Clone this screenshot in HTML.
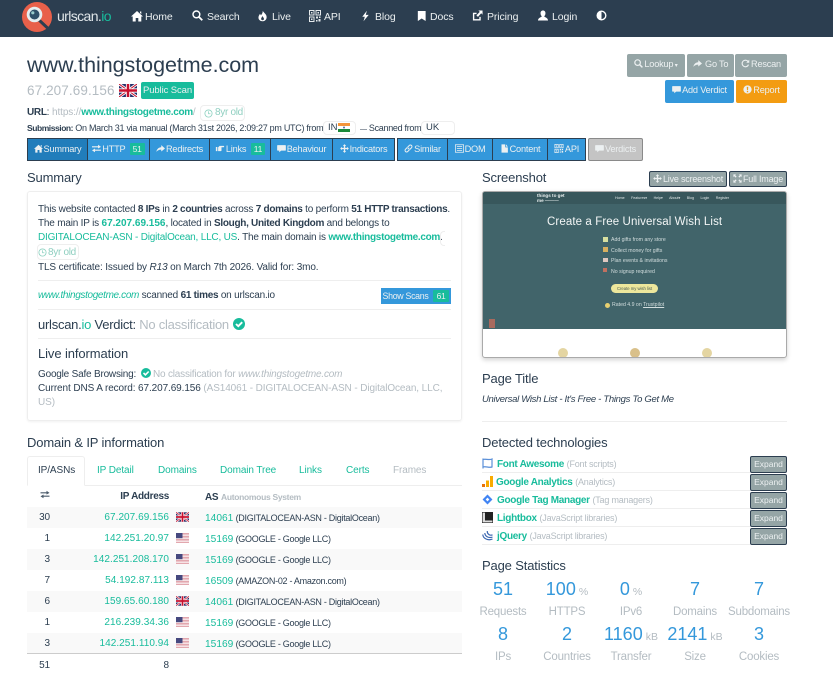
<!DOCTYPE html>
<html><head><meta charset="utf-8">
<style>
html,body{margin:0;padding:0;background:#fff}
body{width:833px;height:685px;overflow:hidden;position:relative;font-family:"Liberation Sans",sans-serif;color:#2c3e50;font-size:10px}
.t,.i,.b,.l{position:absolute}
.t{white-space:nowrap;line-height:14px;height:14px}
.s{font-size:10px;letter-spacing:-.1px}
.p{letter-spacing:-.2px}
.ip{letter-spacing:.05px}
.g{color:#18bc9c}.m{color:#b4bcc2}
b{font-weight:bold;letter-spacing:-.3px}
b.d{letter-spacing:0}
svg{display:block}
.nav{left:0;top:0;width:833px;height:37px;background:#2c3e50;position:absolute}
.nt{color:#ecf0f1;font-size:10.5px;top:10px;letter-spacing:-.1px}
.b{box-sizing:border-box;color:#ecf0f1;font-size:9.2px;line-height:21px;text-align:center;white-space:nowrap;letter-spacing:-.2px}
.bt{background:#3498db;height:23px;top:138px;border:1px solid #2c3e50;border-left:0;line-height:21px}
.gr{background:#95a5a6;border-radius:2px;height:23px;top:54px}
.h{font-size:13px;letter-spacing:-.15px;height:18px;line-height:18px}
.bd{display:inline-block;background:#18bc9c;color:#ecf0f1;border-radius:1px;padding:0 3px;line-height:12px;font-size:8.5px;margin-left:2px}
.ic{display:inline-block;vertical-align:-1px;margin-right:1px}
.hr{position:absolute;height:1px;background:#eee}
.st{position:absolute;left:27px;width:435px;height:21px}
.exp{position:absolute;left:750px;width:37px;height:17px;background:#95a5a6;border:1px solid #2c3e50;box-sizing:border-box;border-radius:2px;color:#ecf0f1;font-size:8.5px;line-height:15px;text-align:center}
.c{position:absolute;width:64px;text-align:center;white-space:nowrap;line-height:20px}
.n{font-size:18px;color:#3498db}
.n small{font-size:10.5px;color:#b4bcc2;margin-left:3px}
.lb{font-size:11.5px;color:#b4bcc2;letter-spacing:-.2px}
.a{font-size:9px;letter-spacing:-.28px}
.a .g{font-size:10.2px;letter-spacing:0}
.sm{font-size:5.2px;color:#d3dede;line-height:8px;height:8px}
.tp{font-size:9px;letter-spacing:-.2px;font-weight:normal}
</style></head>
<body>
<svg width="0" height="0" style="position:absolute">
<defs>
<symbol id="home" viewBox="0 0 12 12"><path d="M6 1 L12 6.5 H10.3 V11.5 H7.3 V8 H4.7 V11.5 H1.7 V6.5 H0 Z M9 1.5 H10.3 V4 L9 3 Z" fill="currentColor"/></symbol>
<symbol id="search" viewBox="0 0 12 12"><circle cx="4.8" cy="4.8" r="3.7" fill="none" stroke="currentColor" stroke-width="1.6"/><path d="M7.5 7.5 L11.2 11.2" stroke="currentColor" stroke-width="2"/></symbol>
<symbol id="fire" viewBox="0 0 12 12"><path d="M6.3 .3 C7 2.5 10.8 4 10.5 7.6 C10.3 10.2 8.3 11.7 6 11.7 C3.5 11.7 1.5 10 1.6 7.5 C1.7 5.8 2.7 4.8 3.3 3.6 C3.8 4.4 4 5 4.3 5.3 C5.3 4 6.4 2.5 6.3 .3 Z M6 6 C5.6 7.3 4.3 8 4.5 9.3 C4.6 10.2 5.2 10.6 6 10.6 C6.9 10.6 7.6 10 7.6 9.1 C7.6 8 6.4 7.3 6 6 Z" fill="currentColor" fill-rule="evenodd"/></symbol>
<symbol id="qr" viewBox="0 0 12 12"><path d="M.5.5h4.5v4.5h-4.5zM7 .5h4.5v4.5h-4.5zM.5 7h4.5v4.5h-4.5z" fill="none" stroke="currentColor" stroke-width="1"/><path d="M2 2h1.500v1.500h-1.500zM8.500 2h1.500v1.500h-1.500zM2 8.500h1.500v1.500h-1.500zM7 6.500h2v2h-2zM9.500 9h2v2.500h-2zM7 10h1.500v1.500h-1.500zM10 6.500h1.500v1.500h-1.500z" fill="currentColor"/></symbol>
<symbol id="bolt" viewBox="0 0 12 12"><path d="M7.500 .3 L2.500 6.800 H5.300 L3.800 11.700 L9.500 4.800 H6.300 Z" fill="currentColor"/></symbol>
<symbol id="book" viewBox="0 0 12 12"><path d="M2 .5 H10.500 V11.500 L6.200 8.700 L2 11.500 Z" fill="currentColor"/></symbol>
<symbol id="ext" viewBox="0 0 12 12"><path d="M1 3 H5 V4.500 H2.500 V10 H8 V7.500 H9.500 V11.500 H1 Z" fill="currentColor"/><path d="M7 .5 H11.500 V5 L10 3.500 L6.500 7.500 L4.800 5.800 L8.500 2 Z" fill="currentColor"/></symbol>
<symbol id="user" viewBox="0 0 12 12"><path d="M6 .5 C7.800 .5 8.700 1.800 8.700 3.500 C8.700 5 8 6.200 7.300 6.800 C7.300 7.800 11.500 8.300 11.500 11.500 H.5 C.5 8.300 4.700 7.800 4.700 6.800 C4 6.200 3.300 5 3.300 3.500 C3.300 1.800 4.200 .5 6 .5 Z" fill="currentColor"/></symbol>
<symbol id="half" viewBox="0 0 12 12"><circle cx="6" cy="6" r="4.700" fill="none" stroke="currentColor" stroke-width="1.500"/><path d="M6 1 A5 5 0 0 0 6 11 Z" fill="currentColor"/></symbol>
<symbol id="swap" viewBox="0 0 12 12"><path d="M0 3 H8 V1 L12 3.800 L8 6 V4.500 H0 Z M12 7.500 H4 V6 L0 8.500 L4 11 V9 H12 Z" fill="currentColor"/></symbol>
<symbol id="share" viewBox="0 0 12 12"><path d="M7 1.500 L12 6 L7 10 V7.500 C4 7.500 2 8.500 .5 10.500 C1 6.800 3.500 4.500 7 4.300 Z" fill="currentColor"/></symbol>
<symbol id="hand" viewBox="0 0 12 12"><path d="M.5 4H2.500V9.500H.5zM3.500 4.500 L5.500 2.500 H11 A1 1 0 0 1 11 4.300 H8 V8.500 A1 1 0 0 1 7 9.500 H3.500 Z" fill="currentColor"/></symbol>
<symbol id="chat" viewBox="0 0 12 12"><path d="M1 1.500 H11 A.8 .8 0 0 1 11.800 2.300 V8 A.8 .8 0 0 1 11 8.800 H5.500 L3 11 V8.800 H1 A.8 .8 0 0 1 .2 8 V2.300 A.8 .8 0 0 1 1 1.500 Z" fill="currentColor"/></symbol>
<symbol id="move" viewBox="0 0 12 12"><path d="M6 .2 L8.200 2.700 H6.900 V5.100 H9.300 V3.800 L11.800 6 L9.300 8.200 V6.900 H6.900 V9.300 H8.200 L6 11.800 L3.800 9.300 H5.100 V6.900 H2.700 V8.200 L.2 6 L2.700 3.800 V5.100 H5.100 V2.700 H3.800 Z" fill="currentColor"/></symbol>
<symbol id="link" viewBox="0 0 12 12"><path d="M5 7 L7 5 M4.500 4.500 L2 7 A2.100 2.100 0 0 0 5 10 L7.300 7.700 M7.500 7.500 L10 5 A2.100 2.100 0 0 0 7 2 L4.700 4.300" fill="none" stroke="currentColor" stroke-width="1.300"/></symbol>
<symbol id="list" viewBox="0 0 12 12"><path d="M.5 1 H11.500 V11 H.5 Z" fill="none" stroke="currentColor" stroke-width="1"/><path d="M2.500 3h7v1h-7zM2.500 5.500h7v1h-7zM2.500 8h7v1h-7z" fill="currentColor"/></symbol>
<symbol id="file" viewBox="0 0 12 12"><path d="M2 .5 H7 V4.500 H10.500 V11.500 H2 Z M8 .5 L10.500 3.500 H8 Z" fill="currentColor"/></symbol>
<symbol id="refresh" viewBox="0 0 12 12"><path d="M10 7.500 A4.400 4.400 0 1 1 9.300 3.200" fill="none" stroke="currentColor" stroke-width="1.500"/><path d="M11 .8 V5 H7 Z" fill="currentColor"/></symbol>
<symbol id="warn" viewBox="0 0 12 12"><circle cx="6" cy="6" r="5.500" fill="currentColor"/><path d="M5 2.500 H7 L6.700 7 H5.300 Z M5.100 8 H6.900 V9.700 H5.100 Z" fill="#f39c12"/></symbol>
<symbol id="full" viewBox="0 0 12 12"><path d="M.5 .5 H4 L3 1.700 L4.800 3.500 L3.500 4.800 L1.700 3 L.5 4 Z M11.500 .5 V4 L10.300 3 L8.500 4.800 L7.200 3.500 L9 1.700 L8 .5 Z M.5 11.500 V8 L1.700 9 L3.500 7.200 L4.800 8.500 L3 10.300 L4 11.500 Z M11.500 11.500 H8 L9 10.300 L7.200 8.500 L8.500 7.200 L10.300 9 L11.500 8 Z" fill="currentColor"/></symbol>
<symbol id="clock" viewBox="0 0 12 12"><circle cx="6" cy="6" r="4.800" fill="none" stroke="currentColor" stroke-width="1.100"/><path d="M6 3 V6.300 H8.500" fill="none" stroke="currentColor" stroke-width="1"/></symbol>
<symbol id="ok" viewBox="0 0 12 12"><circle cx="6" cy="6" r="6" fill="#18bc9c"/><path d="M3 6 L5.300 8.200 L9.200 4.200" fill="none" stroke="#fff" stroke-width="1.900"/></symbol>
<symbol id="uk" viewBox="0 0 18 13"><rect width="18" height="13" fill="#27306b"/><path d="M0 0 L18 13 M18 0 L0 13" stroke="#fff" stroke-width="2.800"/><path d="M0 0 L18 13 M18 0 L0 13" stroke="#c8102e" stroke-width="1"/><path d="M9 0 V13 M0 6.500 H18" stroke="#fff" stroke-width="4.200"/><path d="M9 0 V13 M0 6.500 H18" stroke="#c8102e" stroke-width="2.500"/></symbol>
<symbol id="us" viewBox="0 0 13 10"><rect width="13" height="10" fill="#fff"/><path d="M0 .4H13M0 1.900H13M0 3.400H13M0 4.900H13M0 6.400H13M0 7.900H13M0 9.400H13" stroke="#d98a94" stroke-width=".8"/><rect width="6.500" height="5.200" fill="#46497f"/></symbol>
<symbol id="in" viewBox="0 0 12 9"><rect width="12" height="3" fill="#f4953a"/><rect y="3" width="12" height="3" fill="#fff"/><rect y="6" width="12" height="3" fill="#1a8a3a"/><circle cx="6" cy="4.500" r="1" fill="#5a6a9a"/></symbol>
</defs>
</svg>

<div class="nav"></div>
<svg class="i" style="left:22px;top:2px" width="30" height="30" viewBox="0 0 30 30"><circle cx="15" cy="15" r="15" fill="#e8604a"/><path d="M17 18 L25 25.500" stroke="#2c3e50" stroke-width="3" stroke-linecap="round"/><circle cx="12.500" cy="12.500" r="7.800" fill="#e5eef0"/><circle cx="12.500" cy="12.500" r="5" fill="#2f5069"/><circle cx="10.800" cy="10.800" r="1.600" fill="#9cc"/></svg>
<span class="t" style="left:57px;top:8px;font-size:14px;line-height:17px;height:17px;color:#dfe5e8;letter-spacing:-.6px">urlscan.<span class="g">io</span></span>
<svg class="i" style="left:131px;top:10px;color:#fff" width="12" height="12"><use href="#home"/></svg><span class="t nt" style="left:145px">Home</span>
<svg class="i" style="left:192px;top:10px;color:#fff" width="11" height="11"><use href="#search"/></svg><span class="t nt" style="left:207px">Search</span>
<svg class="i" style="left:257px;top:10px;color:#fff" width="11" height="12"><use href="#fire"/></svg><span class="t nt" style="left:272px">Live</span>
<svg class="i" style="left:309px;top:10px;color:#e6eaec" width="12" height="12"><use href="#qr"/></svg><span class="t nt" style="left:324px">API</span>
<svg class="i" style="left:360px;top:10px;color:#fff" width="11" height="12"><use href="#bolt"/></svg><span class="t nt" style="left:375px">Blog</span>
<svg class="i" style="left:416px;top:10px;color:#fff" width="11" height="12"><use href="#book"/></svg><span class="t nt" style="left:430px">Docs</span>
<svg class="i" style="left:472px;top:10px;color:#fff" width="11" height="11"><use href="#ext"/></svg><span class="t nt" style="left:487px">Pricing</span>
<svg class="i" style="left:537px;top:10px;color:#fff" width="12" height="11"><use href="#user"/></svg><span class="t nt" style="left:552px">Login</span>
<svg class="i" style="left:596px;top:10px;color:#fff" width="11" height="11"><use href="#half"/></svg>

<span class="t" style="left:27px;top:52px;font-size:21.500px;line-height:26px;height:26px;letter-spacing:-.05px">www.thingstogetme.com</span>
<span class="t m" style="left:27px;top:82px;font-size:13.500px;line-height:18px;height:18px;letter-spacing:.1px">67.207.69.156</span>
<svg class="i" style="left:119px;top:84px" width="18" height="13"><use href="#uk"/></svg>
<div class="b" style="left:141px;top:82px;width:53px;height:17px;background:#18bc9c;border-radius:2px;line-height:17px;font-size:9.500px;letter-spacing:-.1px">Public Scan</div>

<span class="t s" style="left:27px;top:106px"><b>URL</b>: <span class="m">https://</span><b class="g">www.thingstogetme.com</b><span class="m">/</span></span>
<div class="i" style="left:200px;top:105px;width:45px;height:16px;border:1px solid #eee;border-radius:4px;box-sizing:border-box"></div>
<svg class="i" style="left:204px;top:109px;color:#8fd3c2" width="9" height="9"><use href="#clock"/></svg>
<span class="t s" style="left:215px;top:106px;color:#8fcfc0;letter-spacing:-.3px">8yr old</span>
<span class="t" style="left:27px;top:121px;font-size:9px;letter-spacing:-.28px"><b style="font-size:8.500px;letter-spacing:-.45px">Submission:</b> On March 31 via manual (March 31st 2026, 2:09:27 pm UTC) from</span>
<div class="i" style="left:323px;top:121px;width:33px;height:14px;border:1px solid #eee;border-radius:4px;box-sizing:border-box"></div>
<span class="t" style="left:328px;top:121px;font-size:9.500px">IN</span>
<svg class="i" style="left:338px;top:123px" width="12" height="9"><use href="#in"/></svg>
<span class="t" style="left:360px;top:121px;font-size:9px;letter-spacing:-.3px"><span style="font-size:7px">—</span> Scanned from</span>
<div class="i" style="left:421px;top:121px;width:34px;height:14px;border:1px solid #eee;border-radius:4px;box-sizing:border-box"></div>
<span class="t" style="left:426px;top:121px;font-size:9.500px">UK</span>

<div class="b bt" style="left:27px;width:61px;background:#217dbb;border-left:1px solid #2c3e50"><svg class="ic" width="9" height="9"><use href="#home"/></svg>Summary</div>
<div class="b bt" style="left:88px;width:62px"><svg class="ic" width="9" height="9"><use href="#swap"/></svg>HTTP <span class="bd">51</span></div>
<div class="b bt" style="left:150px;width:60px"><svg class="ic" width="9" height="9"><use href="#share"/></svg>Redirects</div>
<div class="b bt" style="left:210px;width:61px"><svg class="ic" width="10" height="9"><use href="#hand"/></svg>Links <span class="bd">11</span></div>
<div class="b bt" style="left:271px;width:62px"><svg class="ic" width="9" height="9"><use href="#chat"/></svg>Behaviour</div>
<div class="b bt" style="left:333px;width:62px"><svg class="ic" width="9" height="9"><use href="#move"/></svg>Indicators</div>
<div class="b bt" style="left:397px;width:51px;border-left:1px solid #2c3e50"><svg class="ic" width="9" height="9"><use href="#link"/></svg>Similar</div>
<div class="b bt" style="left:448px;width:45px"><svg class="ic" width="9" height="9"><use href="#list"/></svg>DOM</div>
<div class="b bt" style="left:493px;width:55px"><svg class="ic" width="9" height="9"><use href="#file"/></svg>Content</div>
<div class="b bt" style="left:548px;width:38px"><svg class="ic" width="10" height="9"><use href="#qr"/></svg>API</div>
<div class="b bt" style="left:588px;width:55px;background:#c4c4c4;border:1px solid #8a8a8a;border-radius:2px"><svg class="ic" width="9" height="9"><use href="#chat"/></svg>Verdicts</div>

<div class="b gr" style="left:627px;width:58px"><svg class="ic" width="9" height="9"><use href="#search"/></svg>Lookup<span style="font-size:6px"> ▾</span></div>
<div class="b gr" style="left:687px;width:47px"><svg class="ic" width="9" height="9"><use href="#share"/></svg> Go To</div>
<div class="b gr" style="left:735px;width:52px"><svg class="ic" width="9" height="9"><use href="#refresh"/></svg>Rescan</div>
<div class="b gr" style="left:665px;top:80px;width:69px;background:#3498db"><svg class="ic" width="9" height="9"><use href="#chat"/></svg>Add Verdict</div>
<div class="b gr" style="left:736px;top:80px;width:51px;background:#f39c12"><svg class="ic" width="9" height="9"><use href="#warn"/></svg>Report</div>

<span class="t h" style="left:27px;top:169px">Summary</span>
<div class="i" style="left:27px;top:191px;width:435px;height:230px;border:1px solid #eee;border-radius:3px;box-sizing:border-box;box-shadow:0 1px 2px rgba(0,0,0,.06)"></div>
<span class="t s p" style="left:38px;top:203px">This website contacted <b>8 IPs</b> in <b>2 countries</b> across <b>7 domains</b> to perform <b>51 HTTP transactions</b>.</span>
<span class="t s p" style="left:38px;top:217px">The main IP is <b class="g d">67.207.69.156</b>, located in <b>Slough, United Kingdom</b> and belongs to</span>
<span class="t s p" style="left:38px;top:231px"><span class="g">DIGITALOCEAN-ASN - DigitalOcean, LLC, US</span>. The main domain is <b class="g">www.thingstogetme.com</b>.</span>
<div class="i" style="left:440px;top:231px;width:5px;height:15px;border:1px solid #eee;border-right:0;border-radius:4px 0 0 4px;box-sizing:border-box"></div>
<div class="i" style="left:37px;top:244px;width:42px;height:16px;border:1px solid #eee;border-radius:4px;box-sizing:border-box"></div>
<svg class="i" style="left:38px;top:248px;color:#8fd3c2" width="9" height="9"><use href="#clock"/></svg>
<span class="t s" style="left:48px;top:246px;color:#8fcfc0;letter-spacing:-.3px">8yr old</span>
<span class="t s" style="left:38px;top:261px;letter-spacing:-.13px">TLS certificate: Issued by <i>R13</i> on March 7th 2026. Valid for: 3mo.</span>
<div class="hr" style="left:38px;top:280px;width:413px"></div>
<span class="t s p" style="left:38px;top:289px"><i class="g" style="letter-spacing:-.35px">www.thingstogetme.com</i> scanned <b>61 times</b> on urlscan.io</span>
<div class="b" style="left:381px;top:288px;width:70px;height:16px;background:#3498db;line-height:16px;font-size:8.800px;letter-spacing:-.3px">Show Scans <span class="bd" style="padding:0 4px">61</span></div>
<div class="hr" style="left:38px;top:309px;width:413px"></div>
<span class="t" style="left:38px;top:317px;font-size:13px;line-height:16px;height:16px;letter-spacing:-.25px">urlscan.<span class="g">io</span> Verdict: <span class="m">No classification</span></span>
<svg class="i" style="left:233px;top:318px" width="12" height="12"><use href="#ok"/></svg>
<div class="hr" style="left:38px;top:338px;width:413px"></div>
<span class="t" style="left:38px;top:346px;font-size:13px;line-height:16px;height:16px;letter-spacing:-.1px">Live information</span>
<span class="t s p" style="left:38px;top:368px">Google Safe Browsing:</span>
<svg class="i" style="left:141px;top:368px" width="10" height="10"><use href="#ok"/></svg>
<span class="t s m p" style="left:153px;top:368px">No classification for <i>www.thingstogetme.com</i></span>
<span class="t s" style="left:38px;top:382px">Current DNS A record: 67.207.69.156 <span class="m">(AS14061 - DIGITALOCEAN-ASN - DigitalOcean, LLC,</span></span>
<span class="t s m" style="left:38px;top:396px">US)</span>

<span class="t h" style="left:482px;top:169px">Screenshot</span>
<div class="b" style="left:649px;top:171px;width:78px;height:16px;background:#95a5a6;border:1px solid #2c3e50;border-radius:2px;line-height:14px;font-size:9px"><svg class="ic" width="9" height="9"><use href="#move"/></svg>Live screenshot</div>
<div class="b" style="left:729px;top:171px;width:58px;height:16px;background:#95a5a6;border:1px solid #2c3e50;border-radius:2px;line-height:14px;font-size:9px"><svg class="ic" width="9" height="9"><use href="#full"/></svg>Full Image</div>

<div class="i" style="left:482px;top:191px;width:305px;height:167px;border:1px solid #aaa;border-radius:3px;box-sizing:border-box;overflow:hidden;background:#fff;box-shadow:0 2px 5px rgba(0,0,0,.18)">
 <div class="i" style="left:0;top:0;width:303px;height:137px;background:#41646a"></div>
 <div class="i" style="left:0;top:0;width:303px;height:12px;background:#38575c"></div>
 <div style="filter:blur(.3px)">
 <span class="t" style="left:54px;top:1px;font-size:4.600px;color:#e8eeee;line-height:5px;height:5px;font-weight:bold">things to get</span>
 <span class="t" style="left:54px;top:6px;font-size:4.600px;color:#e8eeee;line-height:5px;height:5px;font-weight:bold">me ———</span>
 <span class="t" style="left:132px;top:3px;font-size:3.600px;color:#dfe7e7;line-height:6px;height:6px;word-spacing:5.500px">Home Features▾ Help▾ About▾ Blog Login Register</span>
 <span class="t" style="left:64px;top:23px;font-size:11.500px;color:#f3f6f6;line-height:14px;letter-spacing:.1px">Create a Free Universal Wish List</span>
 <div class="i" style="left:120px;top:45px;width:5px;height:5px;background:#d8dfa0"></div>
 <span class="t sm" style="left:128px;top:44px">Add gifts from any store</span>
 <div class="i" style="left:120px;top:55px;width:5px;height:5px;background:#d8b060"></div>
 <span class="t sm" style="left:128px;top:55px">Collect money for gifts</span>
 <div class="i" style="left:120px;top:66px;width:5px;height:4px;background:#e0c8c0"></div>
 <span class="t sm" style="left:128px;top:65px">Plan events &amp; invitations</span>
 <div class="i" style="left:120px;top:76px;width:4px;height:4px;background:#c07060"></div>
 <span class="t sm" style="left:128px;top:76px">No signup required</span>
 <div class="i" style="left:128px;top:92px;width:47px;height:9px;background:#ede79c;border-radius:5px"></div>
 <span class="t" style="left:134px;top:92px;font-size:4.200px;color:#4a5a50;line-height:9px;height:9px">Create my wish list</span>
 <div class="i" style="left:122px;top:111px;width:5px;height:5px;background:#e8d070;border-radius:50%"></div>
 <span class="t sm" style="left:129px;top:109px">Rated 4.9 on <u>Trustpilot</u></span>
 <div class="i" style="left:6px;top:127px;width:6px;height:9px;background:#a86a5e"></div>
 <div class="i" style="left:75px;top:156px;width:10px;height:10px;border-radius:50%;background:#e4d5a2"></div>
 <div class="i" style="left:147px;top:156px;width:10px;height:10px;border-radius:50%;background:#d9c08a"></div>
 <div class="i" style="left:219px;top:156px;width:10px;height:10px;border-radius:50%;background:#e4d5a2"></div>
 </div>
</div>

<span class="t h" style="left:482px;top:370px">Page Title</span>
<span class="t" style="left:482px;top:393px;font-size:9.500px;font-style:italic;letter-spacing:-.3px">Universal Wish List - It's Free - Things To Get Me</span>
<div class="hr" style="left:482px;top:421px;width:305px"></div>

<span class="t h" style="left:27px;top:434px">Domain &amp; IP information</span>
<div class="i" style="left:27px;top:456px;width:58px;height:30px;border:1px solid #eee;border-bottom:1px solid #fff;border-radius:3px 3px 0 0;box-sizing:border-box;background:#fff;z-index:2"></div>
<div class="hr" style="left:27px;top:485px;width:435px"></div>
<span class="t s" style="left:38px;top:464px;z-index:3">IP/ASNs</span>
<span class="t s g" style="left:97px;top:464px">IP Detail</span>
<span class="t s g" style="left:158px;top:464px">Domains</span>
<span class="t s g" style="left:220px;top:464px">Domain Tree</span>
<span class="t s g" style="left:299px;top:464px">Links</span>
<span class="t s g" style="left:346px;top:464px">Certs</span>
<span class="t s m" style="left:393px;top:464px">Frames</span>

<svg class="i" style="left:40px;top:490px;color:#4a5a6a" width="10" height="9"><use href="#swap"/></svg>
<span class="t s" style="right:664px;top:490px"><b>IP Address</b></span>
<span class="t s" style="left:205px;top:490px"><b>AS</b> <span class="m" style="font-size:8.500px;font-weight:bold;letter-spacing:-.3px">Autonomous System</span></span>

<div class="st" style="top:507px;background:#f9f9f9"></div>
<div class="st" style="top:549px;background:#f9f9f9"></div>
<div class="st" style="top:591px;background:#f9f9f9"></div>
<div class="st" style="top:633px;background:#f9f9f9"></div>
<div class="hr" style="left:27px;top:653px;width:435px;background:#ccc"></div>

<span class="t s" style="right:783px;top:511px">30</span><span class="t s g ip" style="right:664px;top:511px">67.207.69.156</span><svg class="i" style="left:176px;top:512px" width="13" height="10"><use href="#uk"/></svg><span class="t a" style="left:205px;top:511px"><span class="g">14061</span> (DIGITALOCEAN-ASN - DigitalOcean)</span>
<span class="t s" style="right:783px;top:532px">1</span><span class="t s g ip" style="right:664px;top:532px">142.251.20.97</span><svg class="i" style="left:176px;top:533px" width="13" height="10"><use href="#us"/></svg><span class="t a" style="left:205px;top:532px"><span class="g">15169</span> (GOOGLE - Google LLC)</span>
<span class="t s" style="right:783px;top:553px">3</span><span class="t s g ip" style="right:664px;top:553px">142.251.208.170</span><svg class="i" style="left:176px;top:554px" width="13" height="10"><use href="#us"/></svg><span class="t a" style="left:205px;top:553px"><span class="g">15169</span> (GOOGLE - Google LLC)</span>
<span class="t s" style="right:783px;top:574px">7</span><span class="t s g ip" style="right:664px;top:574px">54.192.87.113</span><svg class="i" style="left:176px;top:575px" width="13" height="10"><use href="#us"/></svg><span class="t a" style="left:205px;top:574px"><span class="g">16509</span> (AMAZON-02 - Amazon.com)</span>
<span class="t s" style="right:783px;top:595px">6</span><span class="t s g ip" style="right:664px;top:595px">159.65.60.180</span><svg class="i" style="left:176px;top:596px" width="13" height="10"><use href="#uk"/></svg><span class="t a" style="left:205px;top:595px"><span class="g">14061</span> (DIGITALOCEAN-ASN - DigitalOcean)</span>
<span class="t s" style="right:783px;top:616px">1</span><span class="t s g ip" style="right:664px;top:616px">216.239.34.36</span><svg class="i" style="left:176px;top:617px" width="13" height="10"><use href="#us"/></svg><span class="t a" style="left:205px;top:616px"><span class="g">15169</span> (GOOGLE - Google LLC)</span>
<span class="t s" style="right:783px;top:637px">3</span><span class="t s g ip" style="right:664px;top:637px">142.251.110.94</span><svg class="i" style="left:176px;top:638px" width="13" height="10"><use href="#us"/></svg><span class="t a" style="left:205px;top:637px"><span class="g">15169</span> (GOOGLE - Google LLC)</span>
<span class="t s" style="right:783px;top:659px">51</span><span class="t s" style="right:664px;top:659px">8</span>

<span class="t h" style="left:482px;top:434px">Detected technologies</span>
<svg class="i" style="left:482px;top:458px" width="11" height="11" viewBox="0 0 11 11"><path d="M1 1.500 C3.500 .5 7 2.500 10 1 V9 C7 10 3.500 8 1 9 M1 .5 V10.500" fill="none" stroke="#5a8fd8" stroke-width="1.200"/></svg>
<span class="t s g" style="left:497px;top:457px"><b>Font Awesome</b> <span class="m tp">(Font scripts)</span></span>
<div class="hr" style="left:482px;top:472px;width:268px"></div><div class="exp" style="top:456px">Expand</div>
<svg class="i" style="left:482px;top:476px" width="11" height="11" viewBox="0 0 11 11"><rect x="0" y="8" width="3" height="3" fill="#e8710a"/><rect x="4" y="4.500" width="3" height="6.500" fill="#f9ab00"/><rect x="8" y="0" width="3" height="11" fill="#f9ab00"/></svg>
<span class="t s g" style="left:496px;top:475px"><b>Google Analytics</b> <span class="m tp">(Analytics)</span></span>
<div class="hr" style="left:482px;top:490px;width:268px"></div><div class="exp" style="top:474px">Expand</div>
<svg class="i" style="left:482px;top:494px" width="11" height="11" viewBox="0 0 11 11"><rect x="2" y="2" width="7" height="7" transform="rotate(45 5.500 5.500)" fill="#4285f4"/><rect x="4.200" y="4.200" width="2.600" height="2.600" transform="rotate(45 5.500 5.500)" fill="#fff"/></svg>
<span class="t s g" style="left:497px;top:493px"><b>Google Tag Manager</b> <span class="m tp">(Tag managers)</span></span>
<div class="hr" style="left:482px;top:508px;width:268px"></div><div class="exp" style="top:492px">Expand</div>
<svg class="i" style="left:482px;top:512px" width="11" height="11" viewBox="0 0 11 11"><rect width="11" height="11" fill="#222"/><path d="M.6 .6 H3 V8.500 H10.400 V10.400 H.6 Z" fill="#ddd"/></svg>
<span class="t s g" style="left:497px;top:511px"><b>Lightbox</b> <span class="m tp">(JavaScript libraries)</span></span>
<div class="hr" style="left:482px;top:526px;width:268px"></div><div class="exp" style="top:510px">Expand</div>
<svg class="i" style="left:482px;top:530px" width="11" height="11" viewBox="0 0 11 11"><path d="M.8 4.500 C1 8.500 6 11 10.500 9 M2.800 3 C3 6.500 7 8.500 10.500 7 M5.300 1 C5 4 8 6 10.500 4.800" fill="none" stroke="#3a66b0" stroke-width="1.200"/></svg>
<span class="t s g" style="left:497px;top:529px"><b>jQuery</b> <span class="m tp">(JavaScript libraries)</span></span>
<div class="hr" style="left:482px;top:544px;width:268px"></div><div class="exp" style="top:528px">Expand</div>

<span class="t h" style="left:482px;top:557px">Page Statistics</span>
<div class="c n" style="left:471px;top:579px">51</div><div class="c lb" style="left:471px;top:602px">Requests</div>
<div class="c n" style="left:535px;top:579px">100<small>%</small></div><div class="c lb" style="left:535px;top:602px">HTTPS</div>
<div class="c n" style="left:599px;top:579px">0<small>%</small></div><div class="c lb" style="left:599px;top:602px">IPv6</div>
<div class="c n" style="left:663px;top:579px">7</div><div class="c lb" style="left:663px;top:602px">Domains</div>
<div class="c n" style="left:727px;top:579px">7</div><div class="c lb" style="left:727px;top:602px">Subdomains</div>
<div class="c n" style="left:471px;top:624px">8</div><div class="c lb" style="left:471px;top:647px">IPs</div>
<div class="c n" style="left:535px;top:624px">2</div><div class="c lb" style="left:535px;top:647px">Countries</div>
<div class="c n" style="left:599px;top:624px">1160<small>kB</small></div><div class="c lb" style="left:599px;top:647px">Transfer</div>
<div class="c n" style="left:663px;top:624px">2141<small>kB</small></div><div class="c lb" style="left:663px;top:647px">Size</div>
<div class="c n" style="left:727px;top:624px">3</div><div class="c lb" style="left:727px;top:647px">Cookies</div>
</body></html>
